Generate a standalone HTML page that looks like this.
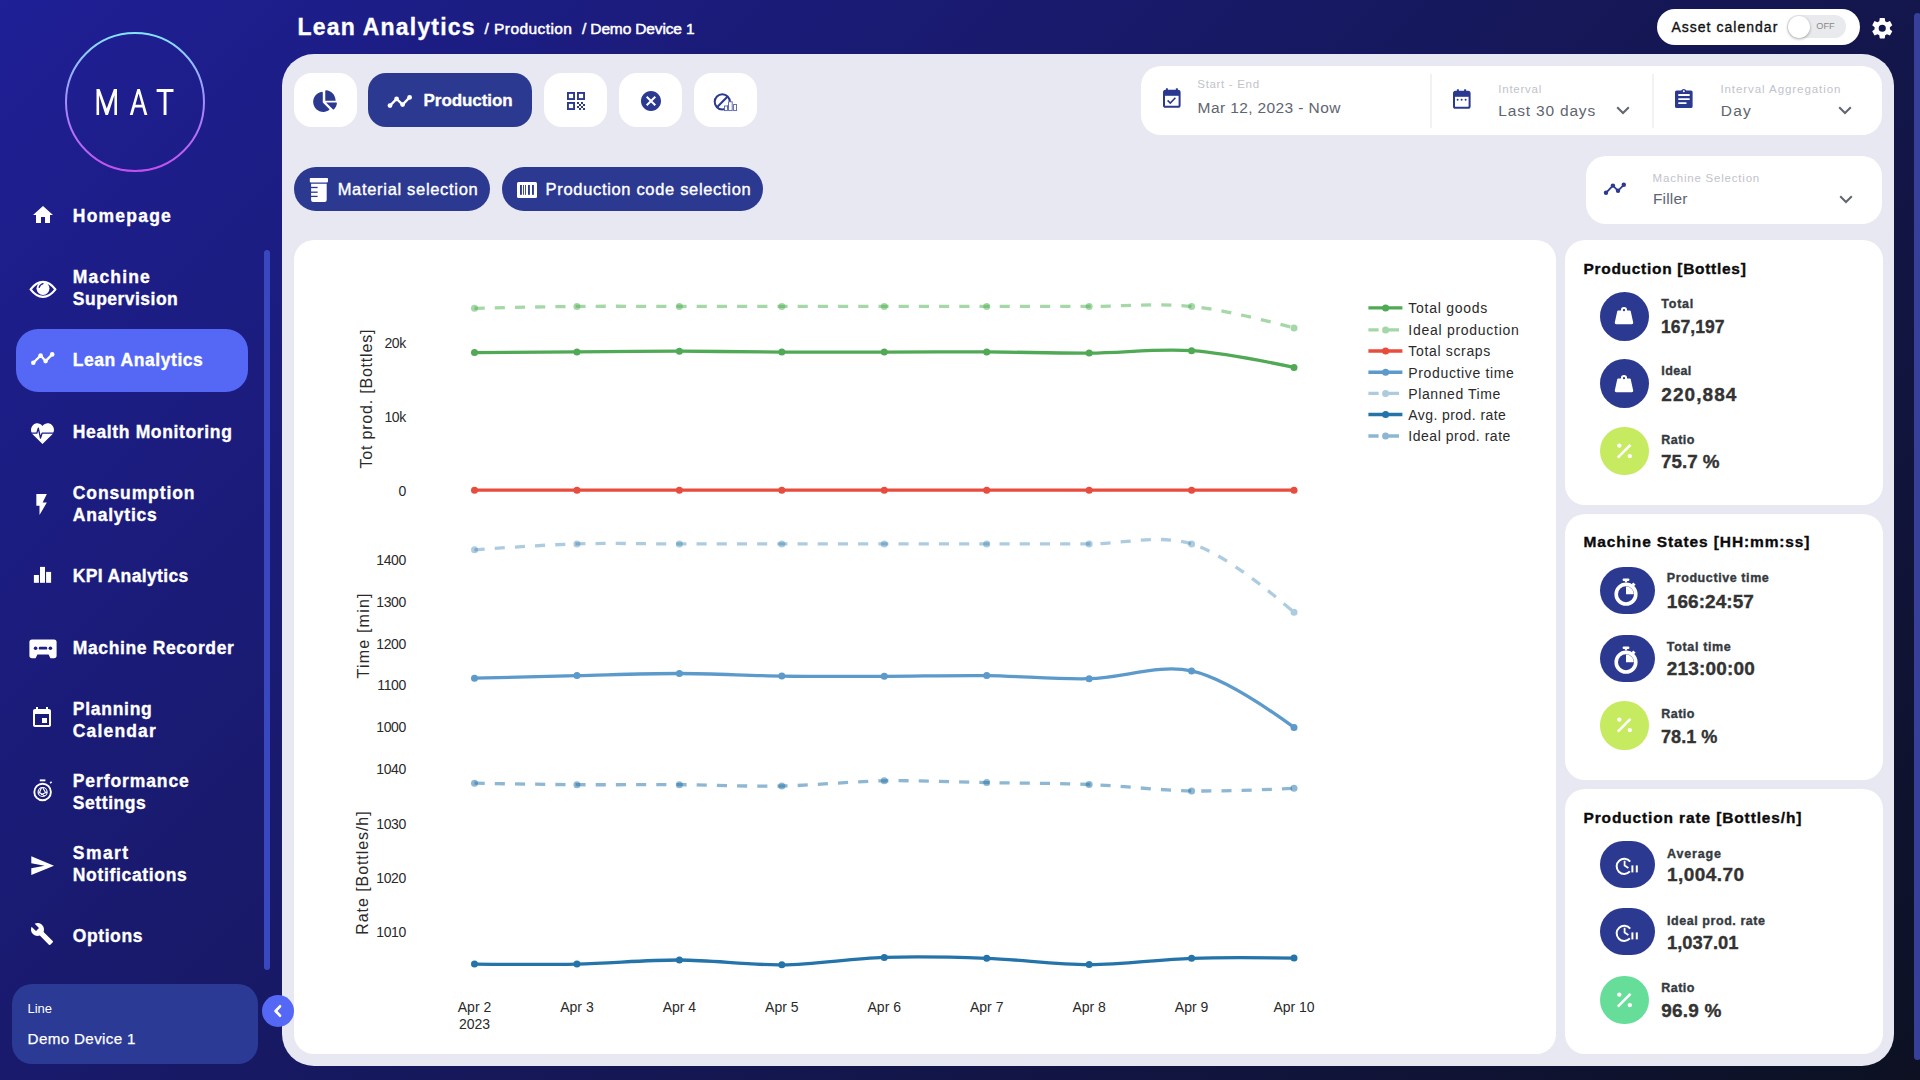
<!DOCTYPE html>
<html><head><meta charset="utf-8"><title>Lean Analytics</title>
<style>
html,body{margin:0;padding:0;}
body{width:1920px;height:1080px;overflow:hidden;position:relative;background:linear-gradient(135deg,#1f1f96 0%,#0d1122 100%);font-family:"Liberation Sans", sans-serif;}
.t{position:absolute;white-space:nowrap;line-height:1;}
.b{position:absolute;}
.s{position:absolute;overflow:visible;}
</style></head><body>
<div class="b" style="left:282px;top:54px;width:1612px;height:1012px;background:#e8e8f2;border-radius:32px;"></div>
<div class="b" style="left:294px;top:73px;width:63px;height:54px;background:#ffffff;border-radius:18px;"></div>
<div class="b" style="left:368px;top:73px;width:164px;height:54px;background:#2b3990;border-radius:18px;"></div>
<div class="b" style="left:544px;top:73px;width:63px;height:54px;background:#ffffff;border-radius:18px;"></div>
<div class="b" style="left:619px;top:73px;width:63px;height:54px;background:#ffffff;border-radius:18px;"></div>
<div class="b" style="left:694px;top:73px;width:63px;height:54px;background:#ffffff;border-radius:18px;"></div>
<div class="b" style="left:294px;top:167px;width:196px;height:44px;background:#2b3990;border-radius:22px;"></div>
<div class="b" style="left:502px;top:167px;width:261px;height:44px;background:#2b3990;border-radius:22px;"></div>
<div class="b" style="left:1141px;top:66px;width:741px;height:69px;background:#ffffff;border-radius:20px;"></div>
<div class="b" style="left:1430.2px;top:74px;width:1.8px;height:54px;background:#f1f2f3;border-radius:0px;"></div>
<div class="b" style="left:1652.2px;top:74px;width:1.8px;height:54px;background:#f1f2f3;border-radius:0px;"></div>
<div class="b" style="left:1586px;top:156px;width:296px;height:68px;background:#ffffff;border-radius:20px;"></div>
<div class="b" style="left:294px;top:240px;width:1262px;height:814px;background:#ffffff;border-radius:20px;"></div>
<div class="b" style="left:1565px;top:240px;width:318px;height:265px;background:#ffffff;border-radius:20px;"></div>
<div class="b" style="left:1565px;top:514px;width:318px;height:266px;background:#ffffff;border-radius:20px;"></div>
<div class="b" style="left:1565px;top:789px;width:318px;height:265px;background:#ffffff;border-radius:20px;"></div>
<svg class="s" style="left:60px;top:27px;" width="150" height="150" viewBox="0 0 150 150"><defs><linearGradient id="lg" x1="0" y1="0" x2="0" y2="1"><stop offset="0" stop-color="#86e3ff"/><stop offset="0.5" stop-color="#a48cff"/><stop offset="1" stop-color="#c44ff0"/></linearGradient></defs>
<circle cx="75" cy="75" r="69" fill="none" stroke="url(#lg)" stroke-width="2"/>
<g fill="#fff" fill-rule="evenodd">
<path d="M36.5,87.9 V61.9 H39.6 L46.75,81.6 L53.9,61.9 H57 V87.9 H54.4 V68.2 L48,87.9 H45.5 L39.1,68.2 V87.9 Z"/>
<path d="M69.8,87.9 L77.3,61.9 H79.9 L87.4,87.9 H84.5 L82.4,80.4 H74.8 L72.7,87.9 Z M75.5,77.7 H81.7 L78.6,66.6 Z"/>
<path d="M96.6,61.9 H113.5 V65 H106.5 V87.9 H103.6 V65 H96.6 Z"/>
</g></svg>
<div class="b" style="left:16px;top:329px;width:232px;height:63px;background:#5468f5;border-radius:22px;"></div>
<div class="b" style="left:264px;top:250px;width:6px;height:720px;background:#3a48c0;border-radius:3px;"></div>
<div class="t" style="top:208.38px;font-size:17.5px;font-weight:700;color:#ffffff;letter-spacing:1.219px;-webkit-text-stroke:0.35px #ffffff;left:72.80px;">Homepage</div>
<div class="t" style="top:268.68px;font-size:17.5px;font-weight:700;color:#ffffff;letter-spacing:1.164px;-webkit-text-stroke:0.35px #ffffff;left:72.80px;">Machine</div>
<div class="t" style="top:290.78px;font-size:17.5px;font-weight:700;color:#ffffff;letter-spacing:0.484px;-webkit-text-stroke:0.35px #ffffff;left:72.80px;">Supervision</div>
<div class="t" style="top:352.38px;font-size:17.5px;font-weight:700;color:#ffffff;letter-spacing:0.549px;-webkit-text-stroke:0.35px #ffffff;left:72.80px;">Lean Analytics</div>
<div class="t" style="top:424.38px;font-size:17.5px;font-weight:700;color:#ffffff;letter-spacing:0.643px;-webkit-text-stroke:0.35px #ffffff;left:72.80px;">Health Monitoring</div>
<div class="t" style="top:484.68px;font-size:17.5px;font-weight:700;color:#ffffff;letter-spacing:0.885px;-webkit-text-stroke:0.35px #ffffff;left:72.80px;">Consumption</div>
<div class="t" style="top:506.78px;font-size:17.5px;font-weight:700;color:#ffffff;letter-spacing:0.773px;-webkit-text-stroke:0.35px #ffffff;left:72.80px;">Analytics</div>
<div class="t" style="top:568.38px;font-size:17.5px;font-weight:700;color:#ffffff;letter-spacing:0.359px;-webkit-text-stroke:0.35px #ffffff;left:72.80px;">KPI Analytics</div>
<div class="t" style="top:640.38px;font-size:17.5px;font-weight:700;color:#ffffff;letter-spacing:0.619px;-webkit-text-stroke:0.35px #ffffff;left:72.80px;">Machine Recorder</div>
<div class="t" style="top:700.68px;font-size:17.5px;font-weight:700;color:#ffffff;letter-spacing:0.732px;-webkit-text-stroke:0.35px #ffffff;left:72.80px;">Planning</div>
<div class="t" style="top:722.78px;font-size:17.5px;font-weight:700;color:#ffffff;letter-spacing:1.158px;-webkit-text-stroke:0.35px #ffffff;left:72.80px;">Calendar</div>
<div class="t" style="top:772.68px;font-size:17.5px;font-weight:700;color:#ffffff;letter-spacing:0.900px;-webkit-text-stroke:0.35px #ffffff;left:72.80px;">Performance</div>
<div class="t" style="top:794.78px;font-size:17.5px;font-weight:700;color:#ffffff;letter-spacing:0.567px;-webkit-text-stroke:0.35px #ffffff;left:72.80px;">Settings</div>
<div class="t" style="top:844.68px;font-size:17.5px;font-weight:700;color:#ffffff;letter-spacing:1.448px;-webkit-text-stroke:0.35px #ffffff;left:72.80px;">Smart</div>
<div class="t" style="top:866.78px;font-size:17.5px;font-weight:700;color:#ffffff;letter-spacing:0.669px;-webkit-text-stroke:0.35px #ffffff;left:72.80px;">Notifications</div>
<div class="t" style="top:928.38px;font-size:17.5px;font-weight:700;color:#ffffff;letter-spacing:0.584px;-webkit-text-stroke:0.35px #ffffff;left:72.80px;">Options</div>
<div class="b" style="left:12px;top:984px;width:246px;height:80px;background:#2b3a94;border-radius:20px;"></div>
<div class="t" style="top:1002.29px;font-size:13px;font-weight:400;color:#ffffff;letter-spacing:-0.098px;left:27.60px;">Line</div>
<div class="t" style="top:1030.53px;font-size:15.2px;font-weight:400;color:#ffffff;letter-spacing:0.345px;left:27.60px;-webkit-text-stroke:0.25px #fff;">Demo Device 1</div>
<div class="b" style="left:262px;top:994.8px;width:31.8px;height:31.8px;border-radius:50%;background:#5468f5;"></div>
<svg class="s" style="left:270px;top:1003px;" width="16" height="16" viewBox="0 0 16 16"><path d="M10,3.3 L5.6,8 L10,12.7" fill="none" stroke="#fff" stroke-width="2.7" stroke-linecap="round" stroke-linejoin="round"/></svg>
<div class="t" style="top:15.73px;font-size:23px;font-weight:700;color:#ffffff;letter-spacing:1.192px;-webkit-text-stroke:0.35px #ffffff;left:297.60px;">Lean Analytics</div>
<div class="t" style="top:20.78px;font-size:15.5px;font-weight:400;color:#ffffff;letter-spacing:0.423px;left:484.60px;-webkit-text-stroke:0.5px #fff;">/ Production</div>
<div class="t" style="top:20.78px;font-size:15.5px;font-weight:400;color:#ffffff;letter-spacing:-0.142px;left:582.00px;-webkit-text-stroke:0.5px #fff;">/ Demo Device 1</div>
<div class="b" style="left:1657px;top:9px;width:203px;height:36px;background:#ffffff;border-radius:18px;"></div>
<div class="t" style="top:19.85px;font-size:14px;font-weight:400;color:#111;letter-spacing:1.025px;left:1671.40px;-webkit-text-stroke:0.35px #111;">Asset calendar</div>
<div class="b" style="left:1787px;top:15px;width:59px;height:23px;background:#e8eaed;border-radius:11.5px;"></div>
<div class="t" style="top:21.51px;font-size:9.2px;font-weight:400;color:#888;left:1816.30px;">OFF</div>
<div class="b" style="left:1788px;top:16px;width:22px;height:22px;border-radius:50%;background:#fff;box-shadow:0 1px 3px rgba(0,0,0,0.35);"></div>
<div class="b" style="left:1914px;top:13px;width:7px;height:1047px;background:#36409a;border-radius:3.5px;"></div>
<div class="t" style="top:92.11px;font-size:17px;font-weight:700;color:#ffffff;letter-spacing:-0.082px;-webkit-text-stroke:0.35px #ffffff;left:423.60px;">Production</div>
<div class="t" style="top:180.93px;font-size:16.5px;font-weight:400;color:#ffffff;letter-spacing:0.684px;left:337.70px;-webkit-text-stroke:0.4px #fff;">Material selection</div>
<div class="t" style="top:180.93px;font-size:16.5px;font-weight:400;color:#ffffff;letter-spacing:0.671px;left:545.60px;-webkit-text-stroke:0.4px #fff;">Production code selection</div>
<div class="t" style="top:78.76px;font-size:11.5px;font-weight:400;color:#bfc3cb;letter-spacing:0.678px;left:1197.30px;">Start - End</div>
<div class="t" style="top:99.78px;font-size:15.5px;font-weight:400;color:#5f6570;letter-spacing:0.391px;left:1197.60px;">Mar 12, 2023 - Now</div>
<div class="t" style="top:83.76px;font-size:11.5px;font-weight:400;color:#bfc3cb;letter-spacing:0.759px;left:1498.30px;">Interval</div>
<div class="t" style="top:102.68px;font-size:15.5px;font-weight:400;color:#5f6570;letter-spacing:0.815px;left:1498.30px;">Last 30 days</div>
<div class="t" style="top:83.76px;font-size:11.5px;font-weight:400;color:#bfc3cb;letter-spacing:0.936px;left:1720.40px;">Interval Aggregation</div>
<div class="t" style="top:102.68px;font-size:15.5px;font-weight:400;color:#5f6570;letter-spacing:1.219px;left:1720.80px;">Day</div>
<div class="t" style="top:172.66px;font-size:11.5px;font-weight:400;color:#bfc3cb;letter-spacing:0.791px;left:1652.60px;">Machine Selection</div>
<div class="t" style="top:190.78px;font-size:15.5px;font-weight:400;color:#5f6570;letter-spacing:0.147px;left:1653.00px;">Filler</div>
<svg class="s" style="left:1616px;top:106px;" width="14" height="9" viewBox="0 0 14 9"><path d="M1.2,1.2 L7,7 L12.8,1.2" fill="none" stroke="#606670" stroke-width="2"/></svg>
<svg class="s" style="left:1838px;top:106px;" width="14" height="9" viewBox="0 0 14 9"><path d="M1.2,1.2 L7,7 L12.8,1.2" fill="none" stroke="#606670" stroke-width="2"/></svg>
<svg class="s" style="left:1839px;top:195px;" width="14" height="9" viewBox="0 0 14 9"><path d="M1.2,1.2 L7,7 L12.8,1.2" fill="none" stroke="#606670" stroke-width="2"/></svg>
<div class="t" style="top:260.98px;font-size:15.5px;font-weight:700;color:#0b0b0b;letter-spacing:0.702px;-webkit-text-stroke:0.35px #0b0b0b;left:1583.50px;">Production [Bottles]</div>
<div class="t" style="top:534.48px;font-size:15.5px;font-weight:700;color:#0b0b0b;letter-spacing:0.875px;-webkit-text-stroke:0.35px #0b0b0b;left:1583.50px;">Machine States [HH:mm:ss]</div>
<div class="t" style="top:809.88px;font-size:15.5px;font-weight:700;color:#0b0b0b;letter-spacing:0.865px;-webkit-text-stroke:0.35px #0b0b0b;left:1583.50px;">Production rate [Bottles/h]</div>
<div class="t" style="top:298.42px;font-size:12.5px;font-weight:700;color:#353a40;letter-spacing:0.766px;-webkit-text-stroke:0.35px #353a40;left:1661.30px;">Total</div>
<div class="t" style="top:316.81px;font-size:19px;font-weight:700;color:#333;transform:scaleX(0.9235);transform-origin:0 0;-webkit-text-stroke:0.35px #333;left:1661.30px;">167,197</div>
<div class="t" style="top:365.42px;font-size:12.5px;font-weight:700;color:#353a40;letter-spacing:0.379px;-webkit-text-stroke:0.35px #353a40;left:1661.30px;">Ideal</div>
<div class="t" style="top:385.11px;font-size:19px;font-weight:700;color:#333;letter-spacing:1.057px;-webkit-text-stroke:0.35px #333;left:1661.30px;">220,884</div>
<div class="t" style="top:433.62px;font-size:12.5px;font-weight:700;color:#353a40;letter-spacing:0.438px;-webkit-text-stroke:0.35px #353a40;left:1661.30px;">Ratio</div>
<div class="t" style="top:451.91px;font-size:19px;font-weight:700;color:#333;transform:scaleX(0.9892);transform-origin:0 0;-webkit-text-stroke:0.35px #333;left:1661.30px;">75.7 %</div>
<div class="t" style="top:572.12px;font-size:12.5px;font-weight:700;color:#353a40;letter-spacing:0.588px;-webkit-text-stroke:0.35px #353a40;left:1666.80px;">Productive time</div>
<div class="t" style="top:591.81px;font-size:19px;font-weight:700;color:#333;letter-spacing:0.051px;-webkit-text-stroke:0.35px #333;left:1666.80px;">166:24:57</div>
<div class="t" style="top:640.72px;font-size:12.5px;font-weight:700;color:#353a40;letter-spacing:0.656px;-webkit-text-stroke:0.35px #353a40;left:1666.80px;">Total time</div>
<div class="t" style="top:658.51px;font-size:19px;font-weight:700;color:#333;letter-spacing:0.176px;-webkit-text-stroke:0.35px #333;left:1666.80px;">213:00:00</div>
<div class="t" style="top:707.52px;font-size:12.5px;font-weight:700;color:#353a40;letter-spacing:0.438px;-webkit-text-stroke:0.35px #353a40;left:1661.30px;">Ratio</div>
<div class="t" style="top:726.71px;font-size:19px;font-weight:700;color:#333;transform:scaleX(0.9545);transform-origin:0 0;-webkit-text-stroke:0.35px #333;left:1661.30px;">78.1 %</div>
<div class="t" style="top:848.02px;font-size:12.5px;font-weight:700;color:#353a40;letter-spacing:0.854px;-webkit-text-stroke:0.35px #353a40;left:1667.00px;">Average</div>
<div class="t" style="top:865.31px;font-size:19px;font-weight:700;color:#333;letter-spacing:0.438px;-webkit-text-stroke:0.35px #333;left:1667.00px;">1,004.70</div>
<div class="t" style="top:914.72px;font-size:12.5px;font-weight:700;color:#353a40;letter-spacing:0.560px;-webkit-text-stroke:0.35px #353a40;left:1667.00px;">Ideal prod. rate</div>
<div class="t" style="top:933.31px;font-size:19px;font-weight:700;color:#333;transform:scaleX(0.9666);transform-origin:0 0;-webkit-text-stroke:0.35px #333;left:1667.00px;">1,037.01</div>
<div class="t" style="top:981.92px;font-size:12.5px;font-weight:700;color:#353a40;letter-spacing:0.438px;-webkit-text-stroke:0.35px #353a40;left:1661.30px;">Ratio</div>
<div class="t" style="top:1000.61px;font-size:19px;font-weight:700;color:#333;letter-spacing:0.172px;-webkit-text-stroke:0.35px #333;left:1661.30px;">96.9 %</div>
<div class="b" style="left:1600.1px;top:291.5px;width:49px;height:49px;border-radius:50%;background:#2b3990;"></div>
<svg class="s" style="left:1613.8px;top:306px;" width="20" height="19" viewBox="0 0 20 19"><path d="M4.2,4.6 H15.8 Q16.6,4.6 16.8,5.4 L19.2,16.6 Q19.5,18.3 17.8,18.3 H2.2 Q0.5,18.3 0.8,16.6 L3.2,5.4 Q3.4,4.6 4.2,4.6 Z" fill="#fff"/><circle cx="10" cy="4.2" r="3.1" fill="#fff"/><circle cx="10" cy="4.2" r="1.1" fill="#2b3990"/></svg>
<div class="b" style="left:1600.1px;top:359.0px;width:49px;height:49px;border-radius:50%;background:#2b3990;"></div>
<svg class="s" style="left:1613.8px;top:373.5px;" width="20" height="19" viewBox="0 0 20 19"><path d="M4.2,4.6 H15.8 Q16.6,4.6 16.8,5.4 L19.2,16.6 Q19.5,18.3 17.8,18.3 H2.2 Q0.5,18.3 0.8,16.6 L3.2,5.4 Q3.4,4.6 4.2,4.6 Z" fill="#fff"/><circle cx="10" cy="4.2" r="3.1" fill="#fff"/><circle cx="10" cy="4.2" r="1.1" fill="#2b3990"/></svg>
<div class="b" style="left:1600.3px;top:426.8px;width:48.5px;height:48.5px;border-radius:50%;background:#c6ea60;"></div>
<svg class="s" style="left:1614px;top:440px;" width="21" height="21" viewBox="0 0 21 21"><circle cx="5.3" cy="5.6" r="2.2" fill="#fff"/><circle cx="15.8" cy="16.1" r="2.2" fill="#fff"/><path d="M3.8,17.6 L16.5,4.8" stroke="#fff" stroke-width="2.6"/></svg>
<div class="b" style="left:1600.3px;top:701.1px;width:48.5px;height:48.5px;border-radius:50%;background:#c6ea60;"></div>
<svg class="s" style="left:1614px;top:714.4px;" width="21" height="21" viewBox="0 0 21 21"><circle cx="5.3" cy="5.6" r="2.2" fill="#fff"/><circle cx="15.8" cy="16.1" r="2.2" fill="#fff"/><path d="M3.8,17.6 L16.5,4.8" stroke="#fff" stroke-width="2.6"/></svg>
<div class="b" style="left:1600.3px;top:975.8px;width:48.5px;height:48.5px;border-radius:50%;background:#66dd99;"></div>
<svg class="s" style="left:1614px;top:989px;" width="21" height="21" viewBox="0 0 21 21"><circle cx="5.3" cy="5.6" r="2.2" fill="#fff"/><circle cx="15.8" cy="16.1" r="2.2" fill="#fff"/><path d="M3.8,17.6 L16.5,4.8" stroke="#fff" stroke-width="2.6"/></svg>
<div class="b" style="left:1600px;top:567.0px;width:55px;height:47px;border-radius:23.5px;background:#2b3990;"></div>
<svg class="s" style="left:1614.3px;top:580.4px;" width="24" height="24" viewBox="0 0 24 24"><circle cx="12" cy="14.2" r="9.8" fill="none" stroke="#fff" stroke-width="3.6"/><path d="M12,14.2 V6.4 A7.8,7.8 0 0 1 19.8,14.2 Z" fill="#fff"/><rect x="8.6" y="-1.4" width="6.8" height="2.4" rx="1" fill="#fff"/><path d="M10.6,1 H13.4 L12,3Z" fill="#fff"/><path d="M19.2,2.4 L21.6,4.6 L19.8,6.4 L17.6,4.2Z" fill="#fff"/></svg>
<div class="b" style="left:1600px;top:634.5px;width:55px;height:47px;border-radius:23.5px;background:#2b3990;"></div>
<svg class="s" style="left:1614.3px;top:647.9px;" width="24" height="24" viewBox="0 0 24 24"><circle cx="12" cy="14.2" r="9.8" fill="none" stroke="#fff" stroke-width="3.6"/><path d="M12,14.2 V6.4 A7.8,7.8 0 0 1 19.8,14.2 Z" fill="#fff"/><rect x="8.6" y="-1.4" width="6.8" height="2.4" rx="1" fill="#fff"/><path d="M10.6,1 H13.4 L12,3Z" fill="#fff"/><path d="M19.2,2.4 L21.6,4.6 L19.8,6.4 L17.6,4.2Z" fill="#fff"/></svg>
<div class="b" style="left:1600px;top:841px;width:55px;height:47px;border-radius:23.5px;background:#2b3990;"></div>
<svg class="s" style="left:1614.9px;top:856px;" width="24" height="18" viewBox="0 0 24 18"><path d="M15.2,5.6 A7.6,7.6 0 1 0 14.9,15.4" fill="none" stroke="#fff" stroke-width="2"/><path d="M9.6,4.8 V9.5 L13.4,12" fill="none" stroke="#fff" stroke-width="1.8"/><rect x="16.4" y="9.4" width="2" height="7" fill="#fff"/><rect x="20.8" y="9.4" width="2" height="7" fill="#fff"/></svg>
<div class="b" style="left:1600px;top:908.2px;width:55px;height:47px;border-radius:23.5px;background:#2b3990;"></div>
<svg class="s" style="left:1614.9px;top:923.2px;" width="24" height="18" viewBox="0 0 24 18"><path d="M15.2,5.6 A7.6,7.6 0 1 0 14.9,15.4" fill="none" stroke="#fff" stroke-width="2"/><path d="M9.6,4.8 V9.5 L13.4,12" fill="none" stroke="#fff" stroke-width="1.8"/><rect x="16.4" y="9.4" width="2" height="7" fill="#fff"/><rect x="20.8" y="9.4" width="2" height="7" fill="#fff"/></svg>
<svg class="s" style="left:313px;top:90px;" width="24" height="22" viewBox="36 30 540 492"><path fill="#2b3990" d="M558.3 312H329.7L482 464.3c5.8 5.8 15.4 6.3 21.4.7 37.3-35.1 62.9-82.4 70.4-135.5 1.3-9.1-6-17.5-15.5-17.5zm-15.2-61.9C535.2 135.4 443.6 43.8 328.9 36c-8.8-.6-16.9 6.8-16.9 15.6V272h220.5c8.8 0 16.2-8.1 15.6-16.9zM256 312V82.5c0-9.1-8.4-16.5-17.4-15.2C124.5 83.4 36.6 182.6 40.5 301.4c4 122 109 222 231 220.5 47.9-.6 92.2-16.1 128.5-42.1 7.5-5.3 8-16.4 1.5-22.9L256 312z"/></svg>
<svg class="s" style="left:386px;top:92px;" width="28" height="18" viewBox="0 0 28 18"><path d="M4,13.6 L10.6,6.9 L16.6,12.6 L23.6,5.4" fill="none" stroke="#fff" stroke-width="2.3" stroke-linejoin="round"/><circle cx="4" cy="13.6" r="2.4" fill="#fff"/><circle cx="10.6" cy="6.9" r="2.4" fill="#fff"/><circle cx="16.6" cy="12.6" r="2.4" fill="#fff"/><circle cx="23.6" cy="5.4" r="2.4" fill="#fff"/></svg>
<svg class="s" style="left:567px;top:92px;" width="18" height="18" viewBox="0 0 18 18"><g fill="none" stroke="#2b3990" stroke-width="1.9"><rect x="0.95" y="0.95" width="6.1" height="6.1"/><rect x="10.95" y="0.95" width="6.1" height="6.1"/><rect x="0.95" y="10.95" width="6.1" height="6.1"/></g><g fill="#2b3990"><rect x="10" y="10" width="2" height="2"/><rect x="14" y="10" width="2" height="2"/><rect x="12" y="12" width="2" height="2"/><rect x="16" y="12" width="2" height="2"/><rect x="10" y="14" width="2" height="2"/><rect x="14" y="14" width="2" height="2"/><rect x="12" y="16" width="2" height="2"/><rect x="16" y="16" width="2" height="2"/></g></svg>
<svg class="s" style="left:639px;top:88.8px;" width="24" height="24" viewBox="0 0 24 24"><path fill="#2b3990" d="M12,2C17.53,2 22,6.47 22,12C22,17.53 17.53,22 12,22C6.47,22 2,17.53 2,12C2,6.47 6.47,2 12,2M15.59,7L12,10.59L8.41,7L7,8.41L10.59,12L7,15.59L8.41,17L12,13.41L15.59,17L17,15.59L13.41,12L17,8.41L15.59,7Z"/></svg>
<svg class="s" style="left:712px;top:91px;" width="28" height="22" viewBox="0 0 28 22"><circle cx="10.3" cy="10.8" r="7.6" fill="none" stroke="#2b3990" stroke-width="2"/><path d="M5,16.2 L15.6,5.5" stroke="#2b3990" stroke-width="2"/><g fill="#fff" stroke="#5a63a8" stroke-width="0.9"><rect x="12.5" y="15" width="2.9" height="4.6"/><rect x="16.6" y="10.8" width="3.6" height="8.8"/><rect x="21.6" y="13.5" width="2.9" height="6.1"/></g></svg>
<svg class="s" style="left:309px;top:177px;" width="20" height="26" viewBox="0 0 20 26"><rect x="0.8" y="1" width="18.2" height="4.4" rx="0.8" fill="#fff"/><path d="M2.1,6.7 H17.7 V23 Q17.7,25 15.7,25 H4.1 Q2.1,25 2.1,23 Z" fill="#fff"/><g stroke="#2b3990" stroke-width="1.3"><path d="M2,10.5 H8.6"/><path d="M2,15.2 H8.6"/><path d="M2,19.4 H8.6"/></g></svg>
<svg class="s" style="left:516px;top:181px;" width="22" height="18" viewBox="0 0 22 18"><rect x="1" y="1" width="20" height="16" rx="1.5" fill="#fff"/><g fill="#2b3990"><rect x="4" y="4" width="1.9" height="9.8"/><rect x="7.1" y="4" width="0.9" height="9.8"/><rect x="9.1" y="4" width="0.9" height="9.8"/><rect x="12" y="4" width="1.9" height="9.8"/><rect x="16" y="4" width="1.9" height="9.8"/></g></svg>
<svg class="s" style="left:1163px;top:87.7px;" width="18" height="20" viewBox="0 0 18 20"><rect x="1" y="2.8" width="15.6" height="16" rx="1.6" fill="none" stroke="#2b3990" stroke-width="2"/><rect x="1" y="2.8" width="15.6" height="5" fill="#2b3990"/><rect x="2.9" y="0.3" width="2" height="3" fill="#2b3990"/><rect x="12.85" y="0.3" width="2" height="3" fill="#2b3990"/><path d="M4.6,12.4 L7.3,15 L12.4,9.8" fill="none" stroke="#2b3990" stroke-width="1.6"/></svg>
<svg class="s" style="left:1452.5px;top:88.6px;" width="18" height="20" viewBox="0 0 18 20"><rect x="1" y="2.8" width="15.6" height="16" rx="1.6" fill="none" stroke="#2b3990" stroke-width="2"/><rect x="1" y="2.8" width="15.6" height="5" fill="#2b3990"/><rect x="3.9" y="0.3" width="2" height="3" fill="#2b3990"/><rect x="11.1" y="0.3" width="2" height="3" fill="#2b3990"/><circle cx="4.6" cy="10.8" r="1" fill="#2b3990"/><circle cx="8.6" cy="10.8" r="1" fill="#2b3990"/><circle cx="12.6" cy="10.8" r="1" fill="#2b3990"/></svg>
<svg class="s" style="left:1674.6px;top:88px;" width="18" height="20" viewBox="0 0 18 20"><path d="M1.6,2.4 H6.2 A3,3 0 0 1 11.4,2.4 H16 Q17.6,2.4 17.6,4 V18.4 Q17.6,20 16,20 H1.6 Q0,20 0,18.4 V4 Q0,2.4 1.6,2.4Z" fill="#2b3990"/><circle cx="8.8" cy="3.2" r="1" fill="#fff"/><g stroke="#fff" stroke-width="1.9" stroke-linecap="round"><path d="M4,7 H14"/><path d="M4,11.1 H14"/><path d="M4,15.1 H10.8"/></g></svg>
<svg class="s" style="left:1603px;top:180px;" width="26" height="16" viewBox="0 0 26 16"><path d="M3,12.8 L9.9,5.6 L15,10.8 L20.8,4.8" fill="none" stroke="#2b3990" stroke-width="1.8"/><circle cx="3" cy="12.8" r="2.2" fill="#2b3990"/><circle cx="9.9" cy="5.6" r="2.2" fill="#2b3990"/><circle cx="15" cy="10.8" r="2.2" fill="#2b3990"/><circle cx="20.8" cy="4.8" r="2.2" fill="#2b3990"/></svg>
<svg class="s" style="left:1872px;top:18px;" width="20.5" height="20.5" viewBox="2 2 20 20"><path fill="#fff" d="M12,15.5A3.5,3.5 0 0,1 8.5,12A3.5,3.5 0 0,1 12,8.5A3.5,3.5 0 0,1 15.5,12A3.5,3.5 0 0,1 12,15.5M19.43,12.97C19.47,12.65 19.5,12.33 19.5,12C19.5,11.67 19.47,11.34 19.43,11L21.54,9.37C21.73,9.22 21.78,8.95 21.66,8.73L19.66,5.27C19.54,5.05 19.27,4.96 19.05,5.05L16.56,6.05C16.04,5.66 15.5,5.32 14.87,5.07L14.5,2.42C14.46,2.18 14.25,2 14,2H10C9.75,2 9.54,2.18 9.5,2.42L9.13,5.07C8.5,5.32 7.96,5.66 7.44,6.05L4.95,5.05C4.73,4.96 4.46,5.05 4.34,5.27L2.34,8.73C2.21,8.95 2.27,9.22 2.46,9.37L4.57,11C4.53,11.34 4.5,11.67 4.5,12C4.5,12.33 4.53,12.65 4.57,12.97L2.46,14.63C2.27,14.78 2.21,15.05 2.34,15.27L4.34,18.73C4.46,18.95 4.73,19.03 4.95,18.95L7.44,17.94C7.96,18.34 8.5,18.68 9.13,18.93L9.5,21.58C9.54,21.82 9.75,22 10,22H14C14.25,22 14.46,21.82 14.5,21.58L14.87,18.93C15.5,18.67 16.04,18.34 16.56,17.94L19.05,18.95C19.27,19.03 19.54,18.95 19.66,18.73L21.66,15.27C21.78,15.05 21.73,14.78 21.54,14.63L19.43,12.97Z" transform="translate(0,0)"/></svg>
<svg class="s" style="left:30.5px;top:202.5px;" width="24" height="24" viewBox="0 0 24 24"><path fill="#fff" d="M10 20v-6h4v6h5v-8h3L12 3 2 12h3v8z"/></svg>
<svg class="s" style="left:28.5px;top:280px;" width="28" height="18" viewBox="0 0 28 18"><path d="M1.6,9.3 C5.6,4 9.5,1.8 14,1.8 C18.5,1.8 22.4,4 26.4,9.3 C22.4,14.6 18.5,16.8 14,16.8 C9.5,16.8 5.6,14.6 1.6,9.3 Z" fill="none" stroke="#fff" stroke-width="2.2" stroke-linejoin="round"/><circle cx="14" cy="8.5" r="6.5" fill="#fff"/><path d="M10.2,7.4 Q10.8,4.6 14,3.6" fill="none" stroke="#1e1d8a" stroke-width="1.3" stroke-linecap="round"/></svg>
<svg class="s" style="left:30px;top:351px;" width="26" height="16" viewBox="0 0 26 16"><path d="M3.3,11.8 L10.6,4.6 L15.6,10.1 L22.2,3.4" fill="none" stroke="#fff" stroke-width="2.3" stroke-linejoin="round"/><circle cx="3.3" cy="11.8" r="2.3" fill="#fff"/><circle cx="10.6" cy="4.6" r="2.3" fill="#fff"/><circle cx="15.6" cy="10.1" r="2.3" fill="#fff"/><circle cx="22.2" cy="3.4" r="2.3" fill="#fff"/></svg>
<svg class="s" style="left:31px;top:422.8px;" width="23" height="21.2" viewBox="0 0 23 21.2"><path fill="#fff" d="M11.5,21.1 L2.1,11.7 C-0.7,8.9 -0.7,4.3 2.2,1.9 C4.9,-0.5 9.1,-0.1 11.5,3.1 C13.9,-0.1 18.1,-0.5 20.8,1.9 C23.7,4.3 23.7,8.9 20.9,11.7 Z"/><path d="M-0.5,10.2 H5.8 L7.3,5.2 L9.5,15 L11.1,10.2 H23.5" fill="none" stroke="#1e1d8a" stroke-width="1.3" stroke-linejoin="round"/></svg>
<svg class="s" style="left:29.35px;top:491.8px;" width="25.2" height="25.2" viewBox="0 0 24 24"><path fill="#fff" d="M7 2v11h3v9l7-12h-4l4-8z"/></svg>
<svg class="s" style="left:33px;top:566px;" width="19" height="17" viewBox="0 0 19 17"><g fill="#fff"><rect x="0.9" y="9" width="5" height="7.8"/><rect x="7" y="0.9" width="5" height="15.9"/><rect x="13.1" y="5.9" width="5" height="10.9"/></g></svg>
<svg class="s" style="left:28.5px;top:639px;" width="28" height="20" viewBox="0 0 28 20"><path fill="#fff" d="M3,0.4 H25 Q27.6,0.4 27.6,3 V16.6 Q27.6,19.3 25,19.3 H21.4 L19.6,15.6 H8.4 L6.6,19.3 H3 Q0.4,19.3 0.4,16.6 V3 Q0.4,0.4 3,0.4Z"/><circle cx="6.6" cy="9.2" r="1.8" fill="#1e1d8a"/><circle cx="21.4" cy="9.2" r="1.8" fill="#1e1d8a"/><rect x="9.8" y="7.8" width="8.4" height="2.8" rx="1.2" fill="#1e1d8a"/></svg>
<svg class="s" style="left:30px;top:706px;" width="24" height="24" viewBox="0 0 24 24"><path fill="#fff" d="M17 12h-5v5h5v-5zM16 1v2H8V1H6v2H5c-1.11 0-1.99.9-1.99 2L3 19c0 1.1.89 2 2 2h14c1.1 0 2-.9 2-2V5c0-1.1-.9-2-2-2h-1V1h-2zm3 18H5V8h14v11z"/></svg>
<svg class="s" style="left:32px;top:778px;" width="22" height="25" viewBox="0 0 22 25"><circle cx="10.6" cy="14" r="8.3" fill="none" stroke="#fff" stroke-width="1.9"/><rect x="7.8" y="1.4" width="5.6" height="1.9" fill="#fff"/><path d="M18.2,5.2 L19.6,3.8" stroke="#fff" stroke-width="1.6"/><g stroke="#fff" stroke-width="1.2" fill="none"><circle cx="10.6" cy="14" r="4.5"/><path d="M10.6,9.5 L13.8,15"/><path d="M15.1,14 L9,16.8"/><path d="M12.8,17.9 L7.4,14.6"/><path d="M7.2,15.2 L9.4,9.7"/></g></svg>
<svg class="s" style="left:30.6px;top:855.6px;" width="23.2" height="19.4" viewBox="0 0 23.2 19.4"><path fill="#fff" d="M0.3,0.3 L23,9.7 L0.3,19.1 L0.3,12.2 L13.6,9.7 L0.3,7.2 Z"/></svg>
<svg class="s" style="left:30.4px;top:922.4px;" width="24" height="24" viewBox="0 0 24 24"><path fill="#fff" d="M22.7 19l-9.1-9.1c.9-2.3.4-5-1.5-6.9-2-2-5-2.4-7.4-1.3L9 6 6 9 1.6 4.7C.4 7.1.9 10.1 2.9 12.1c1.9 1.9 4.6 2.4 6.9 1.5l9.1 9.1c.4.4 1 .4 1.4 0l2.3-2.3c.5-.4.5-1.1.1-1.4z"/></svg>
<svg class="s" style="left:0px;top:0px;" width="1920" height="1080" viewBox="0 0 1920 1080"><g fill="#50a955" fill-opacity="1"><path d="M474.50,352.60Q542.79,352.13 576.94,351.90C611.09,351.67 645.23,351.17 679.38,351.20C713.53,351.23 747.67,351.95 781.82,352.10C815.97,352.25 850.11,352.13 884.26,352.10C918.41,352.07 952.55,351.73 986.70,351.90C1020.85,352.07 1055.00,353.30 1089.14,353.10C1123.29,352.90 1157.54,348.34 1191.58,350.70Q1225.84,353.07 1294.02,367.40" fill="none" stroke="#50a955" stroke-opacity="1" stroke-width="3.3"/><circle cx="474.50" cy="352.60" r="3.5"/><circle cx="576.94" cy="351.90" r="3.5"/><circle cx="679.38" cy="351.20" r="3.5"/><circle cx="781.82" cy="352.10" r="3.5"/><circle cx="884.26" cy="352.10" r="3.5"/><circle cx="986.70" cy="351.90" r="3.5"/><circle cx="1089.14" cy="353.10" r="3.5"/><circle cx="1191.58" cy="350.70" r="3.5"/><circle cx="1294.02" cy="367.40" r="3.5"/></g><g fill="#4caf50" fill-opacity="0.5"><path d="M474.50,308.30Q542.79,306.72 576.94,306.40C611.09,306.08 645.23,306.40 679.38,306.40C713.53,306.40 747.67,306.40 781.82,306.40C815.97,306.40 850.11,306.40 884.26,306.40C918.41,306.40 952.55,306.40 986.70,306.40C1020.85,306.40 1054.99,306.40 1089.14,306.40C1123.29,306.40 1157.62,302.87 1191.58,306.40Q1225.91,309.96 1294.02,327.90" fill="none" stroke="#4caf50" stroke-opacity="0.5" stroke-width="3.3" stroke-dasharray="10.1,10.1"/><circle cx="474.50" cy="308.30" r="3.5"/><circle cx="576.94" cy="306.40" r="3.5"/><circle cx="679.38" cy="306.40" r="3.5"/><circle cx="781.82" cy="306.40" r="3.5"/><circle cx="884.26" cy="306.40" r="3.5"/><circle cx="986.70" cy="306.40" r="3.5"/><circle cx="1089.14" cy="306.40" r="3.5"/><circle cx="1191.58" cy="306.40" r="3.5"/><circle cx="1294.02" cy="327.90" r="3.5"/></g><g fill="#e74c3c" fill-opacity="1"><path d="M474.50,490.20Q542.79,490.20 576.94,490.20C611.09,490.20 645.23,490.20 679.38,490.20C713.53,490.20 747.67,490.20 781.82,490.20C815.97,490.20 850.11,490.20 884.26,490.20C918.41,490.20 952.55,490.20 986.70,490.20C1020.85,490.20 1054.99,490.20 1089.14,490.20C1123.29,490.20 1157.43,490.20 1191.58,490.20Q1225.73,490.20 1294.02,490.20" fill="none" stroke="#e74c3c" stroke-opacity="1" stroke-width="3.3"/><circle cx="474.50" cy="490.20" r="3.5"/><circle cx="576.94" cy="490.20" r="3.5"/><circle cx="679.38" cy="490.20" r="3.5"/><circle cx="781.82" cy="490.20" r="3.5"/><circle cx="884.26" cy="490.20" r="3.5"/><circle cx="986.70" cy="490.20" r="3.5"/><circle cx="1089.14" cy="490.20" r="3.5"/><circle cx="1191.58" cy="490.20" r="3.5"/><circle cx="1294.02" cy="490.20" r="3.5"/></g><g fill="#5b9aca" fill-opacity="1"><path d="M474.50,678.20Q542.79,676.38 576.94,675.60C611.09,674.82 645.23,673.42 679.38,673.50C713.53,673.58 747.67,675.63 781.82,676.10C815.96,676.57 850.11,676.38 884.26,676.30C918.41,676.22 952.56,675.20 986.70,675.60C1020.85,676.00 1055.01,679.48 1089.14,678.70C1123.31,677.92 1158.47,663.70 1191.58,670.90Q1226.91,678.58 1294.02,727.40" fill="none" stroke="#5b9aca" stroke-opacity="1" stroke-width="3.3"/><circle cx="474.50" cy="678.20" r="3.5"/><circle cx="576.94" cy="675.60" r="3.5"/><circle cx="679.38" cy="673.50" r="3.5"/><circle cx="781.82" cy="676.10" r="3.5"/><circle cx="884.26" cy="676.30" r="3.5"/><circle cx="986.70" cy="675.60" r="3.5"/><circle cx="1089.14" cy="678.70" r="3.5"/><circle cx="1191.58" cy="670.90" r="3.5"/><circle cx="1294.02" cy="727.40" r="3.5"/></g><g fill="#2474aa" fill-opacity="0.37"><path d="M474.50,549.80Q542.78,544.88 576.94,543.90C611.07,542.92 645.23,543.90 679.38,543.90C713.53,543.90 747.67,543.90 781.82,543.90C815.97,543.90 850.11,543.90 884.26,543.90C918.41,543.90 952.55,543.90 986.70,543.90C1020.85,543.90 1054.99,543.90 1089.14,543.90C1123.29,543.90 1158.87,533.98 1191.58,543.90Q1227.45,554.77 1294.02,612.30" fill="none" stroke="#2474aa" stroke-opacity="0.37" stroke-width="3.3" stroke-dasharray="10.1,10.1"/><circle cx="474.50" cy="549.80" r="3.5"/><circle cx="576.94" cy="543.90" r="3.5"/><circle cx="679.38" cy="543.90" r="3.5"/><circle cx="781.82" cy="543.90" r="3.5"/><circle cx="884.26" cy="543.90" r="3.5"/><circle cx="986.70" cy="543.90" r="3.5"/><circle cx="1089.14" cy="543.90" r="3.5"/><circle cx="1191.58" cy="543.90" r="3.5"/><circle cx="1294.02" cy="612.30" r="3.5"/></g><g fill="#2474aa" fill-opacity="1"><path d="M474.50,964.10Q542.80,964.78 576.94,964.10C611.09,963.42 645.24,959.88 679.38,960.00C713.53,960.12 747.69,965.23 781.82,964.80C815.98,964.37 850.09,958.48 884.26,957.40C918.38,956.32 952.57,957.10 986.70,958.30C1020.86,959.50 1054.99,964.60 1089.14,964.60C1123.29,964.60 1157.42,959.38 1191.58,958.30Q1225.71,957.22 1294.02,958.10" fill="none" stroke="#2474aa" stroke-opacity="1" stroke-width="3.3"/><circle cx="474.50" cy="964.10" r="3.5"/><circle cx="576.94" cy="964.10" r="3.5"/><circle cx="679.38" cy="960.00" r="3.5"/><circle cx="781.82" cy="964.80" r="3.5"/><circle cx="884.26" cy="957.40" r="3.5"/><circle cx="986.70" cy="958.30" r="3.5"/><circle cx="1089.14" cy="964.60" r="3.5"/><circle cx="1191.58" cy="958.30" r="3.5"/><circle cx="1294.02" cy="958.10" r="3.5"/></g><g fill="#2474aa" fill-opacity="0.52"><path d="M474.50,783.20Q542.79,784.45 576.94,784.70C611.09,784.95 645.23,784.48 679.38,784.70C713.53,784.92 747.68,786.65 781.82,786.00C815.98,785.35 850.10,781.37 884.26,780.80C918.40,780.23 952.55,781.98 986.70,782.60C1020.85,783.22 1055.01,783.12 1089.14,784.50C1123.30,785.88 1157.42,790.27 1191.58,790.90Q1225.71,791.53 1294.02,788.30" fill="none" stroke="#2474aa" stroke-opacity="0.52" stroke-width="3.3" stroke-dasharray="10.1,10.1"/><circle cx="474.50" cy="783.20" r="3.5"/><circle cx="576.94" cy="784.70" r="3.5"/><circle cx="679.38" cy="784.70" r="3.5"/><circle cx="781.82" cy="786.00" r="3.5"/><circle cx="884.26" cy="780.80" r="3.5"/><circle cx="986.70" cy="782.60" r="3.5"/><circle cx="1089.14" cy="784.50" r="3.5"/><circle cx="1191.58" cy="790.90" r="3.5"/><circle cx="1294.02" cy="788.30" r="3.5"/></g><g opacity="1"><path d="M1368.4,307.9h34" stroke="#50a955" stroke-width="3.4"/><circle cx="1385.6" cy="307.9" r="3.5" fill="#50a955"/></g><g opacity="0.5"><path d="M1368.4,329.9h30.6" stroke="#4caf50" stroke-width="3.4" stroke-dasharray="10.2,10.2"/><circle cx="1385.6" cy="329.9" r="3.5" fill="#4caf50"/></g><g opacity="1"><path d="M1368.4,351.0h34" stroke="#e74c3c" stroke-width="3.4"/><circle cx="1385.6" cy="351.0" r="3.5" fill="#e74c3c"/></g><g opacity="1"><path d="M1368.4,372.3h34" stroke="#5b9aca" stroke-width="3.4"/><circle cx="1385.6" cy="372.3" r="3.5" fill="#5b9aca"/></g><g opacity="0.37"><path d="M1368.4,393.4h30.6" stroke="#2474aa" stroke-width="3.4" stroke-dasharray="10.2,10.2"/><circle cx="1385.6" cy="393.4" r="3.5" fill="#2474aa"/></g><g opacity="1"><path d="M1368.4,414.5h34" stroke="#2474aa" stroke-width="3.4"/><circle cx="1385.6" cy="414.5" r="3.5" fill="#2474aa"/></g><g opacity="0.52"><path d="M1368.4,436.0h30.6" stroke="#2474aa" stroke-width="3.4" stroke-dasharray="10.2,10.2"/><circle cx="1385.6" cy="436.0" r="3.5" fill="#2474aa"/></g></svg>
<div class="t" style="top:301.15px;font-size:14px;font-weight:400;color:#2a2a2a;letter-spacing:0.742px;left:1408.30px;">Total goods</div>
<div class="t" style="top:323.15px;font-size:14px;font-weight:400;color:#2a2a2a;letter-spacing:0.728px;left:1408.30px;">Ideal production</div>
<div class="t" style="top:344.25px;font-size:14px;font-weight:400;color:#2a2a2a;letter-spacing:0.666px;left:1408.30px;">Total scraps</div>
<div class="t" style="top:365.55px;font-size:14px;font-weight:400;color:#2a2a2a;letter-spacing:0.646px;left:1408.30px;">Productive time</div>
<div class="t" style="top:386.65px;font-size:14px;font-weight:400;color:#2a2a2a;letter-spacing:0.584px;left:1408.30px;">Planned Time</div>
<div class="t" style="top:407.75px;font-size:14px;font-weight:400;color:#2a2a2a;letter-spacing:0.425px;left:1408.30px;">Avg. prod. rate</div>
<div class="t" style="top:429.25px;font-size:14px;font-weight:400;color:#2a2a2a;letter-spacing:0.525px;left:1408.30px;">Ideal prod. rate</div>
<div class="t" style="top:336.05px;font-size:14px;font-weight:400;color:#2a2a2a;letter-spacing:-0.400px;left:384.44px;">20k</div>
<div class="t" style="top:409.95px;font-size:14px;font-weight:400;color:#2a2a2a;letter-spacing:-0.400px;left:384.44px;">10k</div>
<div class="t" style="top:483.85px;font-size:14px;font-weight:400;color:#2a2a2a;letter-spacing:-0.400px;left:398.42px;">0</div>
<div class="t" style="top:553.05px;font-size:14px;font-weight:400;color:#2a2a2a;letter-spacing:-0.400px;left:376.28px;">1400</div>
<div class="t" style="top:595.25px;font-size:14px;font-weight:400;color:#2a2a2a;letter-spacing:-0.400px;left:376.28px;">1300</div>
<div class="t" style="top:636.75px;font-size:14px;font-weight:400;color:#2a2a2a;letter-spacing:-0.400px;left:376.28px;">1200</div>
<div class="t" style="top:677.95px;font-size:14px;font-weight:400;color:#2a2a2a;letter-spacing:-0.400px;left:377.31px;">1100</div>
<div class="t" style="top:719.75px;font-size:14px;font-weight:400;color:#2a2a2a;letter-spacing:-0.400px;left:376.28px;">1000</div>
<div class="t" style="top:761.75px;font-size:14px;font-weight:400;color:#2a2a2a;letter-spacing:-0.400px;left:376.28px;">1040</div>
<div class="t" style="top:816.55px;font-size:14px;font-weight:400;color:#2a2a2a;letter-spacing:-0.400px;left:376.28px;">1030</div>
<div class="t" style="top:871.05px;font-size:14px;font-weight:400;color:#2a2a2a;letter-spacing:-0.400px;left:376.28px;">1020</div>
<div class="t" style="top:924.75px;font-size:14px;font-weight:400;color:#2a2a2a;letter-spacing:-0.400px;left:376.28px;">1010</div>
<div class="t" style="top:999.65px;font-size:14px;font-weight:400;color:#2a2a2a;left:457.77px;">Apr 2</div>
<div class="t" style="top:999.65px;font-size:14px;font-weight:400;color:#2a2a2a;left:560.21px;">Apr 3</div>
<div class="t" style="top:999.65px;font-size:14px;font-weight:400;color:#2a2a2a;left:662.65px;">Apr 4</div>
<div class="t" style="top:999.65px;font-size:14px;font-weight:400;color:#2a2a2a;left:765.09px;">Apr 5</div>
<div class="t" style="top:999.65px;font-size:14px;font-weight:400;color:#2a2a2a;left:867.53px;">Apr 6</div>
<div class="t" style="top:999.65px;font-size:14px;font-weight:400;color:#2a2a2a;left:969.97px;">Apr 7</div>
<div class="t" style="top:999.65px;font-size:14px;font-weight:400;color:#2a2a2a;left:1072.41px;">Apr 8</div>
<div class="t" style="top:999.65px;font-size:14px;font-weight:400;color:#2a2a2a;left:1174.85px;">Apr 9</div>
<div class="t" style="top:999.65px;font-size:14px;font-weight:400;color:#2a2a2a;left:1273.40px;">Apr 10</div>
<div class="t" style="top:1017.15px;font-size:14px;font-weight:400;color:#2a2a2a;left:458.94px;">2023</div>
<div class="t" style="left:297.00px;top:390.80px;font-size:16px;color:#2a2a2a;letter-spacing:0.798px;transform:rotate(-90deg);transform-origin:69.50px 8.00px;">Tot prod. [Bottles]</div>
<div class="t" style="left:320.50px;top:628.30px;font-size:16px;color:#2a2a2a;letter-spacing:1.207px;transform:rotate(-90deg);transform-origin:42.50px 8.00px;">Time [min]</div>
<div class="t" style="left:300.75px;top:865.20px;font-size:16px;color:#2a2a2a;letter-spacing:0.933px;transform:rotate(-90deg);transform-origin:61.75px 8.00px;">Rate [Bottles/h]</div>
</body></html>
